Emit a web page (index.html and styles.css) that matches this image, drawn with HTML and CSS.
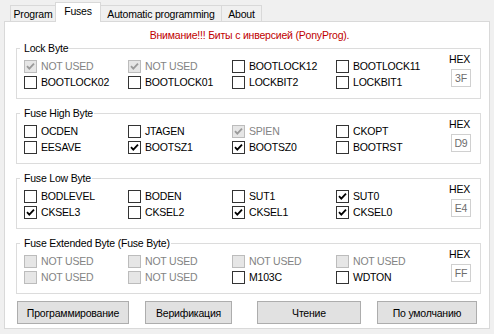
FILE: index.html
```html
<!DOCTYPE html>
<html>
<head>
<meta charset="utf-8">
<link rel="stylesheet" href="styles.css">
</head>
<body>
<div class="tabbar">
  <div class="tab tab-program">Program</div>
  <div class="tab tab-fuses active">Fuses</div>
  <div class="tab tab-auto">Automatic programming</div>
  <div class="tab tab-about">About</div>
</div>
<div class="panel">
  <div class="warning">Внимание!!! Биты с инверсией (PonyProg).</div>

  <fieldset class="group">
    <legend>Lock Byte</legend>
    <div class="group-body">
      <div class="bits">
        <label class="cb disabled checked"><span class="box"><svg viewBox="0 0 11 11"><path d="M2 5.2 L4.3 7.6 L9 2.6"/></svg></span>NOT USED</label>
        <label class="cb disabled checked"><span class="box"><svg viewBox="0 0 11 11"><path d="M2 5.2 L4.3 7.6 L9 2.6"/></svg></span>NOT USED</label>
        <label class="cb"><span class="box"></span>BOOTLOCK12</label>
        <label class="cb"><span class="box"></span>BOOTLOCK11</label>
        <label class="cb"><span class="box"></span>BOOTLOCK02</label>
        <label class="cb"><span class="box"></span>BOOTLOCK01</label>
        <label class="cb"><span class="box"></span>LOCKBIT2</label>
        <label class="cb"><span class="box"></span>LOCKBIT1</label>
      </div>
      <div class="hex"><span class="hex-label">HEX</span><span class="hex-box">3F</span></div>
    </div>
  </fieldset>

  <fieldset class="group">
    <legend>Fuse High Byte</legend>
    <div class="group-body">
      <div class="bits">
        <label class="cb"><span class="box"></span>OCDEN</label>
        <label class="cb"><span class="box"></span>JTAGEN</label>
        <label class="cb disabled checked"><span class="box"><svg viewBox="0 0 11 11"><path d="M2 5.2 L4.3 7.6 L9 2.6"/></svg></span>SPIEN</label>
        <label class="cb"><span class="box"></span>CKOPT</label>
        <label class="cb"><span class="box"></span>EESAVE</label>
        <label class="cb checked"><span class="box"><svg viewBox="0 0 11 11"><path d="M2 5.2 L4.3 7.6 L9 2.6"/></svg></span>BOOTSZ1</label>
        <label class="cb checked"><span class="box"><svg viewBox="0 0 11 11"><path d="M2 5.2 L4.3 7.6 L9 2.6"/></svg></span>BOOTSZ0</label>
        <label class="cb"><span class="box"></span>BOOTRST</label>
      </div>
      <div class="hex"><span class="hex-label">HEX</span><span class="hex-box">D9</span></div>
    </div>
  </fieldset>

  <fieldset class="group">
    <legend>Fuse Low Byte</legend>
    <div class="group-body">
      <div class="bits">
        <label class="cb"><span class="box"></span>BODLEVEL</label>
        <label class="cb"><span class="box"></span>BODEN</label>
        <label class="cb"><span class="box"></span>SUT1</label>
        <label class="cb checked"><span class="box"><svg viewBox="0 0 11 11"><path d="M2 5.2 L4.3 7.6 L9 2.6"/></svg></span>SUT0</label>
        <label class="cb checked"><span class="box"><svg viewBox="0 0 11 11"><path d="M2 5.2 L4.3 7.6 L9 2.6"/></svg></span>CKSEL3</label>
        <label class="cb"><span class="box"></span>CKSEL2</label>
        <label class="cb checked"><span class="box"><svg viewBox="0 0 11 11"><path d="M2 5.2 L4.3 7.6 L9 2.6"/></svg></span>CKSEL1</label>
        <label class="cb checked"><span class="box"><svg viewBox="0 0 11 11"><path d="M2 5.2 L4.3 7.6 L9 2.6"/></svg></span>CKSEL0</label>
      </div>
      <div class="hex"><span class="hex-label">HEX</span><span class="hex-box">E4</span></div>
    </div>
  </fieldset>

  <fieldset class="group">
    <legend>Fuse Extended Byte (Fuse Byte)</legend>
    <div class="group-body">
      <div class="bits">
        <label class="cb disabled"><span class="box"></span>NOT USED</label>
        <label class="cb disabled"><span class="box"></span>NOT USED</label>
        <label class="cb disabled"><span class="box"></span>NOT USED</label>
        <label class="cb disabled"><span class="box"></span>NOT USED</label>
        <label class="cb disabled"><span class="box"></span>NOT USED</label>
        <label class="cb disabled"><span class="box"></span>NOT USED</label>
        <label class="cb"><span class="box"></span>M103C</label>
        <label class="cb"><span class="box"></span>WDTON</label>
      </div>
      <div class="hex"><span class="hex-label">HEX</span><span class="hex-box">FF</span></div>
    </div>
  </fieldset>

  <div class="buttons">
    <button class="btn btn-prog">Программирование</button>
    <button class="btn btn-verify">Верификация</button>
    <button class="btn btn-read">Чтение</button>
    <button class="btn btn-default">По умолчанию</button>
  </div>
</div>
</body>
</html>
```

FILE: styles.css
```css
* { box-sizing: border-box; }

html, body {
  margin: 0;
  padding: 0;
  background: #f0f0f0;
  font-family: "Liberation Sans", Arial, sans-serif;
  font-size: 10.5px;
  letter-spacing: -0.2px;
  color: #000;
}

.tabbar {
  display: flex;
  align-items: flex-end;
  height: 21px;
  padding-left: 10px;
}

.tab {
  height: 16px;
  border: 1px solid #d9d9d9;
  border-bottom: none;
  background: #f0f0f0;
  text-align: center;
  line-height: 14px;
  padding-top: 1px;
  margin-left: -1px;
  white-space: nowrap;
}
.tab-program { width: 46px; margin-left: 0; }
.tab-fuses { width: 46px; }
.tab-auto { width: 122px; }
.tab-about { width: 41px; }

.tab.active {
  position: relative;
  z-index: 1;
  height: 20px;
  margin-bottom: -1px;
  background: #fff;
  padding-top: 1px;
}

.panel {
  margin-left: 4px;
  width: 486px;
  height: 308px;
  border: 1px solid #d9d9d9;
  background: #fff;
  padding: 0 8px 0 11px;
}

.warning {
  margin-top: 7px;
  height: 13px;
  line-height: 13px;
  text-align: center;
  color: #c00000;
  padding-left: 2px;
}

.group {
  margin: 8px 0 0 0;
  padding: 3px 0 8px 7px;
  border: 1px solid #dcdcdc;
  min-width: 0;
}
.group:first-of-type { margin-top: 0; }

.group legend {
  padding: 0 1px 0 4px;
  margin-left: -4px;
  line-height: 13px;
  height: 13px;
}

.group-body {
  display: flex;
}

.bits {
  display: grid;
  grid-template-columns: repeat(4, 104px);
  grid-auto-rows: 16px;
}

.cb {
  display: flex;
  align-items: center;
  gap: 4px;
  white-space: nowrap;
}

.box {
  width: 13px;
  height: 13px;
  border: 1px solid #333;
  background: #fff;
  flex: none;
  display: flex;
}
.box svg {
  width: 11px;
  height: 11px;
  fill: none;
  stroke: #000;
  stroke-width: 1.8;
}

.cb.disabled { color: #838383; }
.cb.disabled .box {
  border-color: #bcbcbc;
  background: #e6e6e6;
}
.cb.disabled .box svg { stroke: #9a9a9a; }

.hex {
  display: flex;
  flex-direction: column;
  margin-left: 9px;
  margin-top: -5px;
}
.hex-label {
  line-height: 13px;
  height: 13px;
}
.hex-box {
  margin-top: 3px;
  margin-left: 2px;
  width: 20px;
  height: 18px;
  border: 1px solid #d0d0d0;
  color: #6d6d6d;
  text-align: center;
  line-height: 16px;
}

.buttons {
  display: flex;
  margin-top: 7px;
  padding-left: 1px;
}
.btn {
  height: 23px;
  border: 1px solid #adadad;
  background: #e1e1e1;
  font-family: "Liberation Sans", Arial, sans-serif;
  font-size: 10.5px;
  letter-spacing: -0.2px;
  color: #000;
  padding: 0;
  margin: 0;
  white-space: nowrap;
}
.btn-prog { width: 112px; }
.btn-verify { width: 87px; margin-left: 16px; }
.btn-read { width: 104px; margin-left: 25px; }
.btn-default { width: 100px; margin-left: 16px; }
```
